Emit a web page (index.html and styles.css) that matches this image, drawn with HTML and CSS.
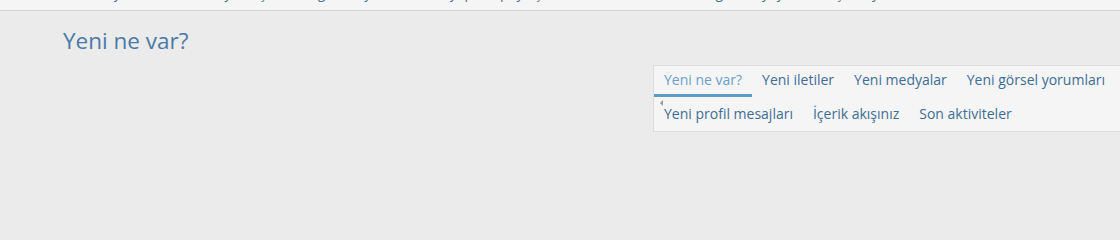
FILE: index.html
```html
<!DOCTYPE html>
<html lang="tr">
<head>
<meta charset="utf-8">
<title>Yeni ne var?</title>
<link rel="stylesheet" href="styles.css">
</head>
<body>
<div class="topbar">
  <p class="topbar-text">Bu sayfada forumdaki yeni içerikleri, güncel yorumları ve yapılan paylaşımları hızlıca bulabilirsiniz; güncel yayınları kaçırmayın.</p>
</div>
<main class="content">
  <h1 class="page-title">Yeni ne var?</h1>
  <div class="tabs-wrap">
    <nav class="tabs">
      <div class="tab-row first">
        <a class="tab active">Yeni ne var?</a>
        <a class="tab">Yeni iletiler</a>
        <a class="tab">Yeni medyalar</a>
        <a class="tab">Yeni görsel yorumları</a>
      </div>
      <span class="scroll-arrow"></span>
      <div class="tab-row second">
        <a class="tab">Yeni profil mesajları</a>
        <a class="tab">İçerik akışınız</a>
        <a class="tab">Son aktiviteler</a>
      </div>
    </nav>
  </div>
</main>
</body>
</html>
```
FILE: styles.css
```css
html, body {
  margin: 0;
  padding: 0;
}
body {
  background: #ebebeb;
  font-family: "Open Sans", "Noto Sans", sans-serif;
  width: 1120px;
  height: 218px;
  overflow: hidden;
}
.topbar {
  height: 10px;
  background: #f5f5f5;
  border-bottom: 1px solid #d2d2d2;
  overflow: hidden;
}
.topbar-text {
  margin: -17px 0 0 78px;
  font-size: 14px;
  line-height: 20px;
  color: #47729b;
  white-space: nowrap;
}
.content {
  display: flex;
  flex-direction: column;
}
.page-title {
  margin: 16px 0 0 63px;
  font-size: 22.5px;
  font-weight: normal;
  line-height: 28px;
  color: #4a7aa5;
}
.tabs-wrap {
  display: flex;
  margin-top: 10px;
  padding-left: 653px;
}
.tabs {
  width: 520px;
  flex: none;
  background: #f5f5f5;
  border: 1px solid #dcdcdc;
  box-sizing: border-box;
  height: 67px;
  display: flex;
  flex-direction: column;
  position: relative;
}
.tab-row {
  display: flex;
}
.tab {
  padding: 0 10px;
  font-size: 14px;
  color: #3d6d96;
  white-space: nowrap;
  cursor: pointer;
}
.first .tab {
  line-height: 28px;
  border-bottom: 3px solid transparent;
}
.second .tab {
  line-height: 33px;
}
.tab.active {
  color: #6a9fcb;
  border-bottom-color: #5b9dc6;
}
.scroll-arrow {
  position: absolute;
  left: 6px;
  top: 34px;
  width: 0;
  height: 0;
  border-top: 3px solid transparent;
  border-bottom: 3px solid transparent;
  border-right: 3px solid #999;
}
```
